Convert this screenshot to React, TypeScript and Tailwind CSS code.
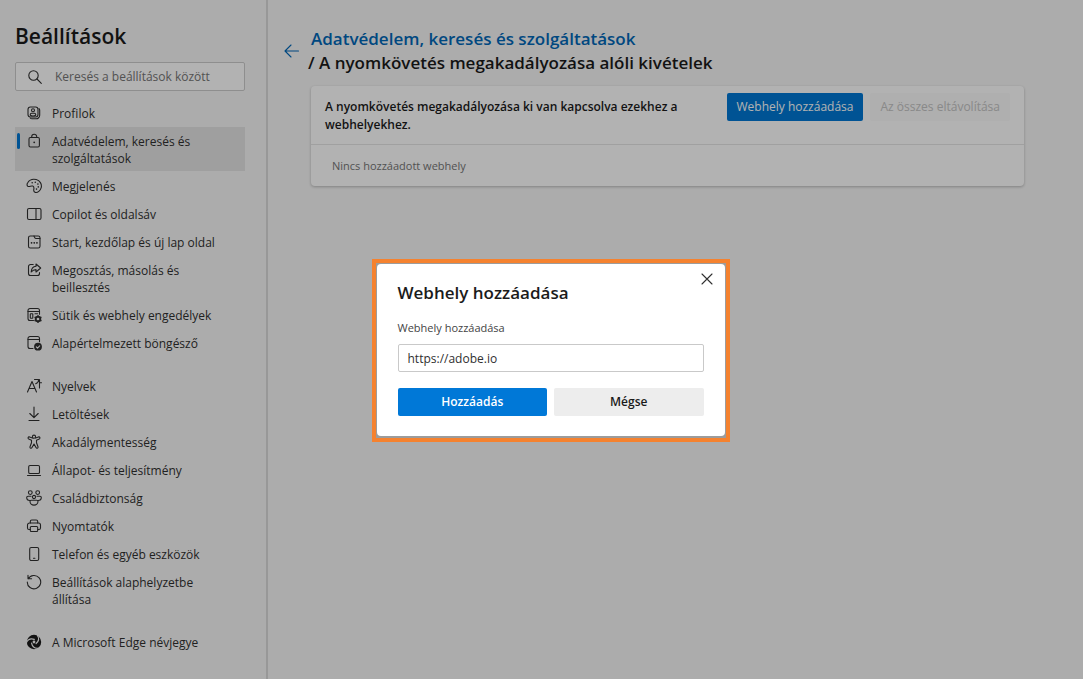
import { useState } from 'react';
import type { ReactNode } from 'react';

interface NavItem {
  label: string;
  icon: ReactNode;
  active?: boolean;
}

function Icon({ children }: { children: ReactNode }) {
  return (
    <svg
      viewBox="0 0 16 16"
      className="w-4 h-4 shrink-0"
      fill="none"
      stroke="currentColor"
      strokeWidth="1.1"
      strokeLinecap="round"
      strokeLinejoin="round"
      aria-hidden="true"
    >
      {children}
    </svg>
  );
}

const mainItems: NavItem[] = [
  {
    label: 'Profilok',
    icon: (
      <Icon>
        <rect x="2" y="2" width="10" height="10" rx="2.4" />
        <circle cx="7" cy="5.2" r="1.5" />
        <path d="M4.3 10.2V9.6c0-.8.6-1.3 1.3-1.3h2.8c.7 0 1.3.5 1.3 1.3v.6c-1.6 1-3.8 1-5.4 0Z" />
        <path d="M13 3.6c.5.4.7.9.7 1.6v5a3.6 3.6 0 0 1-3.6 3.6H6c-.8 0-1.4-.3-1.8-.8" />
      </Icon>
    ),
  },
  {
    label: 'Adatvédelem, keresés és szolgáltatások',
    active: true,
    icon: (
      <Icon>
        <rect x="3" y="4.5" width="10.4" height="9.5" rx="1.4" />
        <path d="M5.700 4.500V3.700a2.500 2.500 0 0 1 5 0v.8" />
        <circle cx="8.200" cy="9.300" r=".9" fill="currentColor" stroke="none" />
      </Icon>
    ),
  },
  {
    label: 'Megjelenés',
    icon: (
      <Icon>
        <path d="M1.800 8.200C.7 7.500.9 5.900 1.700 4.700 3.400 2 6.900.7 10.200 1.500c3.700 1 5.900 4.600 5 8.200-.8 3.100-3.600 5.300-5.900 4.700-1.400-.4-1.800-1.700-1.500-3.100.3-1.500.2-2.700-1-3.200C5.100 7.400 3.500 9.100 1.800 8.200Z" />
        <circle cx="6.200" cy="4.700" r=".8" fill="currentColor" stroke="none" />
        <circle cx="9.300" cy="4.300" r=".8" fill="currentColor" stroke="none" />
        <circle cx="11.900" cy="6.100" r=".8" fill="currentColor" stroke="none" />
        <circle cx="12.300" cy="8.900" r=".8" fill="currentColor" stroke="none" />
        <circle cx="10.500" cy="11.100" r=".8" fill="currentColor" stroke="none" />
      </Icon>
    ),
  },
  {
    label: 'Copilot és oldalsáv',
    icon: (
      <Icon>
        <rect x="1.500" y="2.500" width="13.500" height="11" rx="1.500" />
        <path d="M10 2.500v11" />
      </Icon>
    ),
  },
  {
    label: 'Start, kezdőlap és új lap oldal',
    icon: (
      <Icon>
        <rect x="2.500" y="2" width="11.500" height="12" rx="1.800" />
        <path d="M8 2c.4 1 .8 2.500 1.800 2.500H14" />
        <path d="M5.500 8.800h.1M8.200 8.800h.1M10.900 8.800h.1" strokeWidth="1.700" />
      </Icon>
    ),
  },
  {
    label: 'Megosztás, másolás és beillesztés',
    icon: (
      <Icon>
        <path d="M7.200 2.500H4.500a2 2 0 0 0-2 2v7a2 2 0 0 0 2 2h7a2 2 0 0 0 2-2v-1" />
        <path d="M10 2v2.200C7 4.500 5.400 6.500 5.200 10c1.300-1.700 2.800-2.400 4.800-2.400V10l4.700-4L10 2Z" />
      </Icon>
    ),
  },
  {
    label: 'Sütik és webhely engedélyek',
    icon: (
      <Icon>
        <path d="M7.500 13.500H4a2 2 0 0 1-2-2v-8a2 2 0 0 1 2-2h7.500a2 2 0 0 1 2 2v3.800" />
        <path d="M2 4.500h11.500" />
        <rect x="4.300" y="6.700" width="2.500" height="4.600" rx=".5" />
        <path d="M9 6.800h2.500" />
        <circle cx="12" cy="12" r="2.300" strokeWidth="1.900" />
        <path d="M12 8.700v.5M12 14.800v.5M9.100 10.300l.5.300M14.400 13.400l.5.300M14.900 10.300l-.5.300M9.600 13.400l-.5.300" strokeWidth="1.500" />
      </Icon>
    ),
  },
  {
    label: 'Alapértelmezett böngésző',
    icon: (
      <Icon>
        <path d="M7 13.500H4a2 2 0 0 1-2-2v-8a2 2 0 0 1 2-2h7.500a2 2 0 0 1 2 2v3.300" />
        <path d="M2 4.500h11.500" />
        <circle cx="12" cy="11.700" r="3.900" fill="currentColor" stroke="none" />
        <path d="m10.300 11.900 1.200 1.200 2.200-2.300" className="stroke-[#f7f7f7]" />
      </Icon>
    ),
  },
];

const systemItems: NavItem[] = [
  {
    label: 'Nyelvek',
    icon: (
      <Icon>
        <path d="M1.500 14 6 3.500 10.500 14M3 10.500h6" />
        <path d="M8.500 1.500h4.200c0 2-1.200 3.500-3 4.300M13.500 1.500V10M13.500 4.800h2" />
      </Icon>
    ),
  },
  {
    label: 'Letöltések',
    icon: (
      <Icon>
        <path d="M8 1v10.500M3.800 7.500 8 11.700l4.200-4.200M3 14.500h10" />
      </Icon>
    ),
  },
  {
    label: 'Akadálymentesség',
    icon: (
      <Icon>
        <circle cx="8" cy="2.700" r="1.600" />
        <path d="M6.500 4 3.500 2.900c-1.400-.4-2 1.400-.8 2l2.800 1.300v2.600l-1.500 4c-.4 1.400 1.400 2 2 .8L8 10l2 3.600c.6 1.200 2.400.6 2-.8l-1.500-4V6.200l2.800-1.300c1.200-.6.6-2.400-.8-2L9.500 4" />
      </Icon>
    ),
  },
  {
    label: 'Állapot- és teljesítmény',
    icon: (
      <Icon>
        <rect x="2.700" y="3.500" width="10.800" height="8" rx="1.300" />
        <path d="M1.500 13.500h13" />
      </Icon>
    ),
  },
  {
    label: 'Családbiztonság',
    icon: (
      <Icon>
        <circle cx="4.300" cy="2.600" r="1.900" />
        <circle cx="11.700" cy="2.600" r="1.900" />
        <circle cx="8" cy="7" r="1.600" />
        <path d="M5 6.200H2c-.8 0-1.300.5-1.300 1.200 0 1.600 1.300 3 3.200 3.100M11 6.200h3c.8 0 1.300.5 1.300 1.200 0 1.600-1.300 3-3.200 3.100" />
        <path d="M5.200 10.300h5.600c.7 0 1.200.5 1.200 1.200 0 2-1.800 3.600-4 3.600s-4-1.600-4-3.600c0-.7.500-1.200 1.200-1.200Z" />
      </Icon>
    ),
  },
  {
    label: 'Nyomtatók',
    icon: (
      <Icon>
        <path d="M4.300 5V3.500A1.500 1.500 0 0 1 5.800 2h4.400a1.500 1.500 0 0 1 1.500 1.500V5" />
        <path d="M4.300 11.500H3A1.500 1.500 0 0 1 1.500 10V7a2 2 0 0 1 2-2h9a2 2 0 0 1 2 2v3a1.500 1.500 0 0 1-1.500 1.500h-1.300" />
        <rect x="4.300" y="8.500" width="7.400" height="5" rx="1" />
      </Icon>
    ),
  },
  {
    label: 'Telefon és egyéb eszközök',
    icon: (
      <Icon>
        <rect x="3.700" y="1.500" width="9" height="13" rx="1.600" />
        <path d="M7.500 12.200h1.400" />
      </Icon>
    ),
  },
  {
    label: 'Beállítások alaphelyzetbe állítása',
    icon: (
      <Icon>
        <path d="M2 1.200v3.600h3.600M2.200 4.800A6.700 6.700 0 1 1 1.300 8" />
      </Icon>
    ),
  },
];

const aboutItems: NavItem[] = [
  {
    label: 'A Microsoft Edge névjegye',
    icon: (
      <Icon>
        <circle cx="8" cy="8" r="7.200" className="fill-[#1b1b1b]" stroke="none" />
        <circle cx="8" cy="8" r="1.400" className="fill-[#f7f7f7]" stroke="none" />
        <g className="stroke-[#f7f7f7]" strokeWidth="1.200">
          <path d="M.5 8.500C1.800 5.800 4.800 4.200 8.300 5.400" />
          <path d="M.5 8.500C1.800 5.800 4.800 4.200 8.300 5.400" transform="rotate(120 8 8)" />
          <path d="M.5 8.500C1.800 5.800 4.800 4.200 8.300 5.400" transform="rotate(240 8 8)" />
        </g>
      </Icon>
    ),
  },
];

function NavGroup({ items }: { items: NavItem[] }) {
  return (
    <ul className="flex flex-col gap-px">
      {items.map((item) => (
        <li key={item.label}>
          <a
            href="#"
            aria-current={item.active ? 'page' : undefined}
            className={`relative flex items-start gap-2.5 pt-1.5 pb-1 pl-[11px] pr-5 text-xs leading-[17px] text-[#303030] ${
              item.active ? 'bg-[#e4e4e4]' : ''
            }`}
          >
            {item.active && <span className="absolute left-0.5 top-1.5 h-4 w-[3px] rounded-sm bg-[#0078d4]" />}
            {item.icon}
            <span>{item.label}</span>
          </a>
        </li>
      ))}
    </ul>
  );
}

function Sidebar() {
  return (
    <aside className="w-[268px] shrink-0 border-r-2 border-[#dadada] pl-[15px] pr-[21px] pt-[22px]">
      <h1 className="text-[21px] leading-7 font-semibold text-[#1b1b1b]">Beállítások</h1>
      <label className="mt-3 flex h-[29px] items-center gap-3 rounded-xs border border-[#cccccc] bg-white pl-[11px] text-[#303030]">
        <Icon>
          <circle cx="6.500" cy="6.500" r="4.700" />
          <path d="m10 10 4.300 4.300" />
        </Icon>
        <input
          type="search"
          aria-label="Keresés a beállítások között"
          placeholder="Keresés a beállítások között"
          className="min-w-0 flex-1 bg-transparent text-xs outline-none placeholder:text-[#767676]"
        />
      </label>
      <nav className="mt-2 flex flex-col gap-4">
        <NavGroup items={mainItems} />
        <NavGroup items={systemItems} />
        <NavGroup items={aboutItems} />
      </nav>
    </aside>
  );
}

function AddSiteDialog() {
  const [site, setSite] = useState('https://adobe.io');

  return (
    <div className="fixed inset-0 flex items-center justify-center bg-black/30 pl-[18px] pt-[22px]">
      <div className="border-4 border-[#f5822f] bg-[#9c9c9c] px-px pt-px pb-0.5">
        <form
          role="dialog"
          aria-labelledby="dialog-title"
          onSubmit={(e) => e.preventDefault()}
          className="relative w-[348px] rounded-sm bg-white px-[21px] pb-5 pt-[15px]"
        >
          <button type="button" aria-label="Bezárás" className="absolute right-2 top-[5px] p-0.5 text-[#303030]">
            <Icon>
              <path d="m3 3 10 10M13 3 3 13" />
            </Icon>
          </button>
          <h2 id="dialog-title" className="text-[17px] leading-7 font-semibold text-[#1b1b1b]">
            Webhely hozzáadása
          </h2>
          <label htmlFor="site" className="mt-[13px] block text-[11px] leading-4 text-[#444444]">
            Webhely hozzáadása
          </label>
          <input
            id="site"
            type="text"
            value={site}
            onChange={(e) => setSite(e.target.value)}
            className="mt-2 h-7 w-full rounded-xs border border-[#c9c9c9] px-[9px] text-xs text-[#303030] outline-none"
          />
          <div className="mt-4 grid grid-cols-2 gap-[7px] text-xs font-semibold">
            <button type="submit" className="h-7 rounded-xs bg-[#0078d7] text-white">
              Hozzáadás
            </button>
            <button type="button" className="h-7 rounded-xs bg-[#ededed] text-[#1b1b1b]">
              Mégse
            </button>
          </div>
        </form>
      </div>
    </div>
  );
}

export default function App() {
  return (
    <div className="flex min-h-screen bg-[#f7f7f7] font-['Open_Sans','Noto_Sans',sans-serif]">
      <Sidebar />
      <main className="flex flex-1 items-start gap-2 pl-4 pr-[59px] pt-[27px]">
        <button type="button" aria-label="Vissza" className="mt-4 text-[#0067b8]">
          <Icon>
            <path d="M14.500 8H1M7 2 1 8l6 6" />
          </Icon>
        </button>
        <div className="flex-1">
          <h2 className="text-[17px] leading-6 font-semibold text-[#1b1b1b]">
            <a href="#" className="px-[3px] text-[#0067b8]">
              Adatvédelem, keresés és szolgáltatások
            </a>
            <br />/ A nyomkövetés megakadályozása alóli kivételek
          </h2>
          <section className="ml-[3px] mt-[11px] rounded-sm bg-white shadow-[0_1px_3px_rgba(0,0,0,0.25)]">
            <div className="flex items-start justify-between border-b border-[#e5e5e5] px-[14px] pb-2.5 pt-[7px]">
              <p className="max-w-[380px] pt-[5px] text-xs leading-[18px] font-semibold text-[#1b1b1b]">
                A nyomkövetés megakadályozása ki van kapcsolva ezekhez a webhelyekhez.
              </p>
              <div className="flex gap-[7px] text-xs">
                <button type="button" className="h-7 rounded-xs bg-[#0078d4] px-2.5 text-white">
                  Webhely hozzáadása
                </button>
                <button type="button" disabled className="h-7 rounded-xs bg-[#fbfbfb] px-2.5 text-[#c4c4c4]">
                  Az összes eltávolítása
                </button>
              </div>
            </div>
            <p className="px-[21px] py-3 text-[11px] leading-[17px] text-[#767676]">Nincs hozzáadott webhely</p>
          </section>
        </div>
      </main>
      <AddSiteDialog />
    </div>
  );
}
